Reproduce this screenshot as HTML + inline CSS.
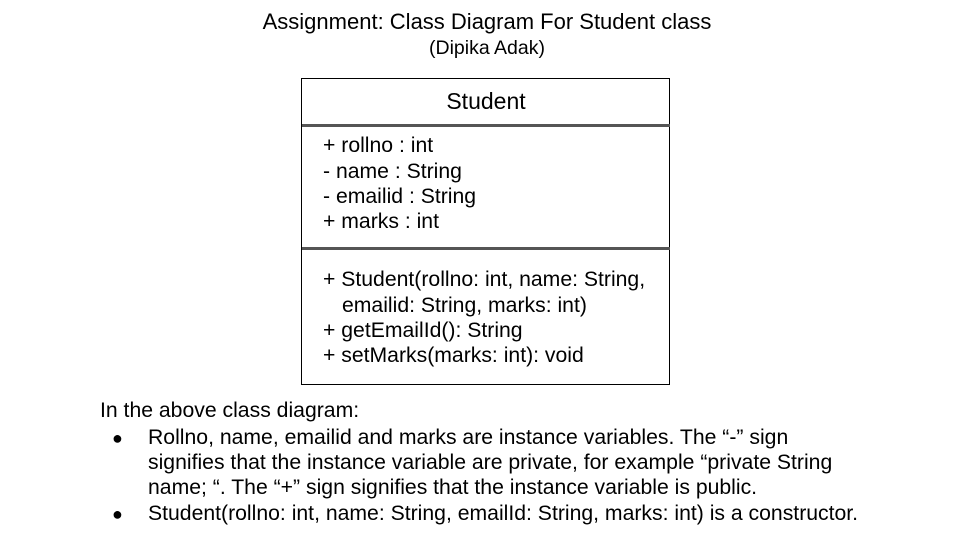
<!DOCTYPE html>
<html><head><meta charset="utf-8"><style>
body{margin:0;width:960px;height:540px;background:#fff;position:relative;overflow:hidden;font-family:"Liberation Sans",Arial,sans-serif;color:#000}
.t{position:absolute;white-space:nowrap;line-height:24px;font-size:21.2px}
.c{left:7px;width:960px;text-align:center}
#box{position:absolute;left:301px;top:78px;width:367px;height:305px;border:1.5px solid #000}
.div{position:absolute;left:302px;width:368px;height:3px;background:#555}
</style></head><body>
<div class="t c" style="top:10px;font-size:22px">Assignment: Class Diagram For Student class</div>
<div class="t c" style="top:36px;font-size:19.5px">(Dipika Adak)</div>
<div id="box"></div>
<div class="div" style="top:124px"></div>
<div class="div" style="top:247px"></div>
<div class="t" style="left:302px;width:368px;text-align:center;top:89px;font-size:23px">Student</div>
<div class="t" style="left:323px;top:134px">+ rollno : int</div>
<div class="t" style="left:323px;top:160px">- name : String</div>
<div class="t" style="left:323px;top:185px">- emailid : String</div>
<div class="t" style="left:323px;top:210px">+ marks : int</div>
<div class="t" style="left:323px;top:268px">+ Student(rollno: int, name: String,</div>
<div class="t" style="left:342px;top:294px">emailid: String, marks: int)</div>
<div class="t" style="left:323px;top:319px">+ getEmailId(): String</div>
<div class="t" style="left:323px;top:344px">+ setMarks(marks: int): void</div>
<div class="t" style="left:100px;top:399px">In the above class diagram:</div>
<div class="t" style="left:112px;top:426px;font-size:18px">●</div>
<div class="t" style="left:148px;top:426px">Rollno, name, emailid and marks are instance variables. The “-” sign</div>
<div class="t" style="left:148px;top:451px">signifies that the instance variable are private, for example “private String</div>
<div class="t" style="left:148px;top:476px">name; “. The “+” sign signifies that the instance variable is public.</div>
<div class="t" style="left:112px;top:502px;font-size:18px">●</div>
<div class="t" style="left:148px;top:502px">Student(rollno: int, name: String, emailId: String, marks: int) is a constructor.</div>
</body></html>
